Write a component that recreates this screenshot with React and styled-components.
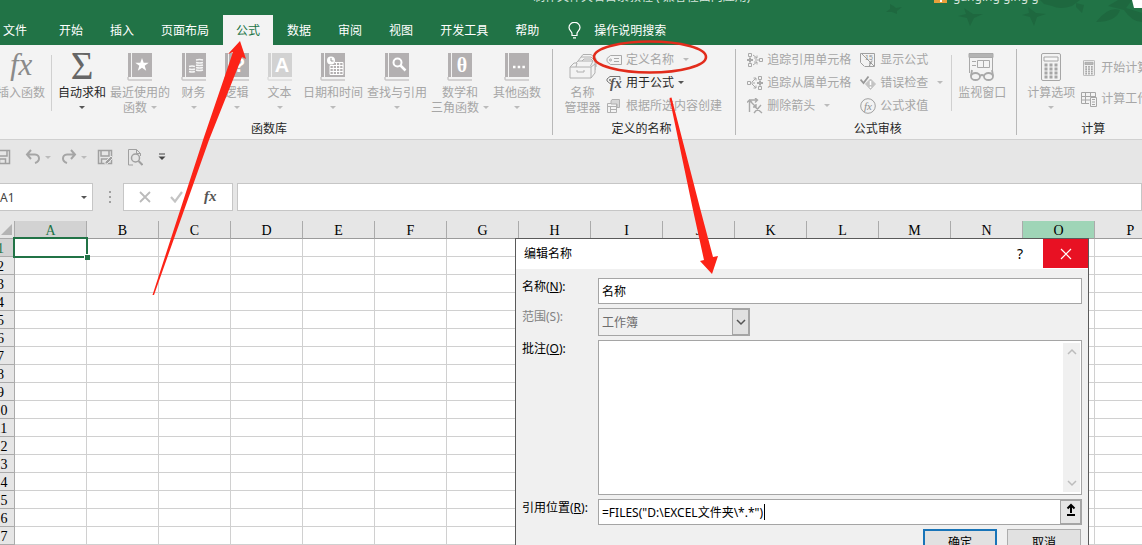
// App.jsx
import React, { useState } from 'react';
import styled, { createGlobalStyle } from 'styled-components';

const GlobalStyle = createGlobalStyle`
  * {
    box-sizing: border-box;
  }

  body {
    margin: 0;
    overflow: hidden;
    background: #e6e6e6;
    color: #262626;
    font: 12px/15px 'Noto Sans', 'Noto Sans CJK SC', sans-serif;
  }

  button, input, select, textarea {
    margin: 0;
    padding: 0;
    border: 0;
    border-radius: 0;
    background: none;
    color: inherit;
    font: inherit;
    outline: none;
  }

  svg {
    display: block;
    flex: none;
  }
`;

const Shell = styled.div`
  position: relative;
  display: flex;
  flex-direction: column;
  height: 100vh;
  margin-left: -13px;
  overflow: hidden;
`;

/* ---------- header ---------- */

const Header = styled.header`
  position: relative;
  background: #217346;
  color: #fff;
`;

const Leaves = styled.svg`
  position: absolute;
  top: 0;
  right: 0;
`;

const TitleBar = styled.div`
  display: flex;
  height: 15px;
  padding-left: 546px;
  overflow: hidden;
  line-height: 12px;
  white-space: nowrap;
  color: #d3e3da;
`;

const Title = styled.span`
  flex: 0 0 388px;
  margin-top: -9px;
`;

const Account = styled.span`
  position: relative;
  margin: -9px 0 0 32px;
`;

const Tabs = styled.nav`
  display: flex;
  gap: 1px;
  height: 30px;
`;

const Tab = styled.button`
  flex: none;
  padding: 0 13px;
  margin: 0 ${({ $file }) => ($file ? '5px 0 3px' : '0')};
  background: ${({ $active }) => ($active ? '#f3f3f3' : 'transparent')};
  color: ${({ $active }) => ($active ? '#217346' : '#fff')};
`;

const Tell = styled.button`
  display: flex;
  align-items: center;
  gap: 13px;
  margin-left: 15px;
`;

/* ---------- ribbon ---------- */

const Ribbon = styled.div`
  display: flex;
  flex: none;
  background: #f3f3f3;
  border-bottom: 1px solid #d0d0d0;
`;

const Group = styled.section`
  display: flex;
  flex: none;
  flex-direction: column;
  justify-content: space-between;
  position: relative;
  height: 94px;
  padding: 3px ${({ $right }) => $right || 4}px 3px ${({ $left }) => $left || 4}px;

  &::after {
    content: '';
    position: absolute;
    top: 4px;
    right: 0;
    bottom: 4px;
    border-right: 1px solid #b8b8b8;
  }
`;

const Tools = styled.div`
  display: flex;
  align-items: flex-start;
`;

const Caption = styled.div`
  text-align: center;
`;

const Big = styled.button`
  display: flex;
  flex: none;
  flex-direction: column;
  align-items: center;
  min-width: 43px;
  padding: 5px 2px 0;
  color: ${({ $on }) => ($on ? '#262626' : '#a6a6a6')};
  white-space: nowrap;
`;

const Label = styled.span`
  margin-top: 4px;
  text-align: center;
`;

const Line = styled.span`
  display: flex;
  align-items: center;
  justify-content: center;
  height: 15px;
  gap: 4px;
`;

const Rule = styled.div`
  height: 56px;
  margin: 7px 4px 0 ${({ $gap }) => $gap || 4}px;
  border-left: 1px solid #d0d0d0;
`;

const Stack = styled.div`
  display: flex;
  flex-direction: column;
  margin-left: ${({ $gap }) => $gap || 0}px;
  padding-top: ${({ $top }) => $top || 0}px;
`;

const Small = styled.button`
  display: flex;
  align-items: center;
  gap: 4px;
  height: ${({ $tall }) => ($tall ? '31px' : '23px')};
  color: ${({ $on }) => ($on ? '#262626' : '#a6a6a6')};
  white-space: nowrap;
`;

const Caret = styled.i`
  margin-left: ${({ $far }) => ($far ? '5px' : '0')};
  border: 3px solid transparent;
  border-top-color: ${({ $dark }) => ($dark ? '#555' : '#bbb')};
  border-bottom: 0;
`;

/* ---------- quick access and formula bar ---------- */

const QuickBar = styled.div`
  display: flex;
  align-items: center;
  height: 34px;
  padding: 0 8px;
  color: #a0a0a0;
`;

const QuickButton = styled.button`
  display: flex;
  align-items: center;
  gap: 4px;
  margin-right: ${({ $split }) => ($split ? '10px' : '14px')};
`;

const FormulaBar = styled.div`
  display: flex;
  height: 28px;
  margin: 9px 0 10px;
`;

const Box = styled.div`
  display: flex;
  align-items: center;
  justify-content: space-around;
  flex: ${({ $grow, $w }) => ($grow ? '1 1 0' : `0 0 ${$w}px`)};
  min-width: 0;
  margin-right: ${({ $grow }) => ($grow ? '0' : '4px')};
  padding: 0 5px;
  background: #fff;
  border: 1px solid #c6c6c6;
`;

const CellName = styled.input`
  flex: 1;
  min-width: 0;
  padding-left: 7px;
  color: #444;
`;

const Formula = styled.input`
  flex: 1;
  min-width: 0;
`;

const Dots = styled.div`
  display: flex;
  flex: 0 0 26px;
  flex-direction: column;
  align-items: center;
  justify-content: center;
  gap: 3px;

  i {
    width: 2px;
    height: 2px;
    background: #a0a0a0;
  }
`;

/* ---------- sheet ---------- */

const SheetArea = styled.main`
  position: relative;
  flex: 1;
  min-height: 0;
  overflow: hidden;
  background: #fff;
`;

const Sheet = styled.table`
  width: 1252px;
  table-layout: fixed;
  border-collapse: separate;
  border-spacing: 0;
  font-family: 'Liberation Serif', serif;
  font-size: 14px;
  color: #000;
`;

const Corner = styled.th`
  width: 28px;
  height: 18px;
  padding: 0 3px 0 14px;
  background: #e6e6e6;
  border-right: 1px solid #ababab;
  border-bottom: 1px solid #ababab;
`;

const ColHead = styled.th`
  height: 18px;
  padding: 2px 0 0;
  background: ${({ $tone }) => $tone || '#e6e6e6'};
  border-right: 1px solid #ababab;
  border-bottom: 1px solid ${({ $active }) => ($active ? '#217346' : '#9b9b9b')};
  color: ${({ $active }) => ($active ? '#217346' : '#000')};
  font-weight: normal;
  line-height: 15px;
`;

const RowHead = styled.th`
  height: 18px;
  padding: 2px 0 0;
  background: ${({ $active }) => ($active ? '#d2d2d2' : '#e6e6e6')};
  border-right: 1px solid #ababab;
  border-bottom: 1px solid #ababab;
  color: ${({ $active }) => ($active ? '#217346' : '#000')};
  font-weight: normal;
  line-height: 15px;
`;

const Cell = styled.td`
  position: relative;
  z-index: ${({ $active }) => ($active ? 1 : 0)};
  height: 18px;
  padding: 0;
  border-right: 1px solid #d0d0d0;
  border-bottom: 1px solid #d0d0d0;
`;

const Selection = styled.div`
  position: absolute;
  inset: -2px;
  border: 2px solid #217346;

  &::after {
    content: '';
    position: absolute;
    right: -4px;
    bottom: -4px;
    width: 5px;
    height: 5px;
    background: #217346;
    border: 1px solid #fff;
    border-right: 0;
    border-bottom: 0;
  }
`;

/* ---------- dialog ---------- */

const Dialog = styled.form`
  position: absolute;
  z-index: 2;
  top: 17px;
  right: 53px;
  width: 574px;
  background: #f0f0f0;
  border: 1px solid #5a5a5a;
  color: #000;
`;

const DialogBar = styled.div`
  display: flex;
  align-items: flex-start;
  height: 30px;
  padding-left: 8px;
  background: #fff;
  line-height: 30px;
`;

const DialogTitle = styled.span`
  flex: 1;
`;

const HelpButton = styled.button`
  width: 46px;
  font-size: 14px;
  line-height: 29px;
`;

const CloseButton = styled.button`
  display: flex;
  align-items: center;
  justify-content: center;
  width: 45px;
  height: 29px;
  background: #e81123;
`;

const Fields = styled.div`
  display: grid;
  grid-template-columns: 76px 1fr;
  row-gap: 4px;
  padding: 9px 6px 4px;
`;

const FieldLabel = styled.label`
  line-height: 18px;
  color: ${({ $off }) => ($off ? '#838383' : '#000')};
`;

const Field = styled.div`
  display: flex;
  align-items: center;
  height: ${({ $h }) => $h || 26}px;
  width: ${({ $w }) => ($w ? `${$w}px` : 'auto')};
  background: ${({ $off }) => ($off ? '#f0f0f0' : '#fff')};
  border: 1px solid #a5a5a5;
  color: ${({ $off }) => ($off ? '#6d6d6d' : '#000')};
`;

const TextInput = styled.input`
  flex: ${({ $fit }) => ($fit ? 'none' : '1')};
  min-width: 0;
  padding-left: 3px;
  field-sizing: ${({ $fit }) => ($fit ? 'content' : 'fixed')};
`;

const TextCursor = styled.i`
  width: 1px;
  height: 16px;
  margin: 0 auto 0 1px;
  background: #000;
`;

const Scope = styled.select`
  flex: 1;
  appearance: none;
  padding-left: 3px;
  opacity: 1;
`;

const DropArrow = styled.span`
  display: flex;
  align-items: center;
  justify-content: center;
  align-self: stretch;
  width: 17px;
  background: #e1e1e1;
  border: 1px solid #a5a5a5;
`;

const Comment = styled.textarea`
  flex: 1;
  align-self: stretch;
  padding: 3px;
  resize: none;
`;

const Scroller = styled.div`
  display: flex;
  flex-direction: column;
  justify-content: space-between;
  align-self: stretch;
  align-items: center;
  width: 17px;
  margin: 2px 1px;
  padding: 5px 0;
  background: #f0f0f0;
`;

const PickButton = styled.button`
  display: flex;
  align-items: flex-start;
  justify-content: center;
  align-self: stretch;
  width: 21px;
  padding-top: 2px;
  background: #e6e6e6;
  border: 1px solid #a5a5a5;
`;

const Actions = styled.div`
  display: flex;
  justify-content: flex-end;
  gap: 10px;
  padding: 0 7px 8px;
`;

const Action = styled.button`
  width: 74px;
  height: 26px;
  background: #e1e1e1;
  border: ${({ $primary }) => ($primary ? '2px solid #1874b8' : '1px solid #adadad')};
`;

const Marks = styled.svg`
  position: absolute;
  z-index: 3;
  top: 0;
  left: 13px;
  pointer-events: none;
`;

/* ---------- icons ---------- */

const serif = "'Liberation Serif', serif";

function Book({ light, children }) {
  const tone = light ? '#d2d2d2' : '#b3b0b1';
  return (
    <svg width="26" height="28" viewBox="0 0 26 28">
      <path d="M1 0h3v24H1z" fill={tone} />
      <path d="M5 0h20v24H5z" fill={tone} />
      <path d="M1 24v2.500q0 .5 .5 .5H25" fill="none" stroke={tone} />
      {children}
    </svg>
  );
}

const BookText = ({ char, size = 20, font = 'Liberation Sans' }) => (
  <text x="15" y="19" fontSize={size} fontWeight="bold" fontFamily={font} textAnchor="middle" fill="#fff">
    {char}
  </text>
);

const FxIcon = () => (
  <svg width="30" height="28" viewBox="0 0 30 28">
    <text x="4" y="22" fontSize="31" fontStyle="italic" fontFamily={serif} fill="#8a8a8a">fx</text>
  </svg>
);

const SumIcon = () => (
  <svg width="28" height="28" viewBox="0 0 28 28">
    <text x="14" y="26" fontSize="39" fontFamily={serif} textAnchor="middle" fill="#666">Σ</text>
  </svg>
);

const RecentIcon = () => (
  <Book>
    <path d="M15 5l1.700 4.800h5l-4 3 1.500 5-4.200-3-4.200 3 1.500-5-4-3h5z" fill="#fff" />
  </Book>
);

const MoneyIcon = () => (
  <Book>
    <g fill="none" stroke="#f5f5f5" strokeWidth="1.500">
      <path d="M15 7q3.500-1 7 0M15 9.500q3.500 1 7 0M15 12q3.500 1 7 0M15 14.500q3.500 1 7 0M15 17q3.500 1 7 0" />
      <path d="M8 13.500q3-1 6 0M8 16q3 1 6 0M8 18.500q3 1 6 0" />
    </g>
  </Book>
);

const DateIcon = () => (
  <Book>
    <circle cx="11" cy="7.500" r="4" fill="#fff" />
    <path d="M11 5v3h2.500" fill="none" stroke="#999" />
    <path d="M10 12.500h13v9H10zM10 15.500h13M10 18.500h13M13.300 12v9M16.500 10v11M19.700 10v11M15 9.500h8v4" fill="none" stroke="#fff" />
  </Book>
);

const LookupIcon = () => (
  <Book>
    <circle cx="13.500" cy="9.500" r="4" fill="none" stroke="#fff" strokeWidth="2" />
    <path d="M16.500 12.500l5 5" stroke="#fff" strokeWidth="2.500" />
  </Book>
);

const MoreIcon = () => (
  <Book>
    <path d="M9 14h2.500M13.700 14h2.500M18.400 14h2.500" stroke="#fff" strokeWidth="2.500" />
  </Book>
);

const ManagerIcon = () => (
  <svg width="28" height="28" viewBox="0 0 28 28" fill="none" stroke="#b0b0b0">
    <path d="M5 12l4-4h15l-2.500 5M9 8l3-4h10l4 4v9M12 4l2-2.500h8l5 4V14M13 8l2-2h7l2 2" fill="#f3f3f3" />
    <path d="M1 14h21v11H1zM1 14l4-4h3l-1 4M22 25l4-5v-9l-4 3" fill="#f3f3f3" />
    <path d="M8 17v2h7v-2" />
  </svg>
);

const TagIcon = () => (
  <svg width="16" height="16" viewBox="0 0 16 16" fill="none" stroke="#a9a9a9">
    <path d="M4.500 3.500h11v9h-11L1 9.500v-3z" />
    <circle cx="4.500" cy="8" r="1" />
    <path d="M8 6.500h5M8 9.500h5" />
  </svg>
);

const UseIcon = () => (
  <svg width="16" height="16" viewBox="0 0 16 16">
    <path d="M14 5V1.500H4L1 4v2l3 2.500h1" fill="none" stroke="#777" />
    <circle cx="4" cy="5" r="1" fill="#777" />
    <text x="4" y="13" fontSize="14" fontStyle="italic" fontWeight="bold" fontFamily={serif} fill="#555">fx</text>
  </svg>
);

const CreateIcon = () => (
  <svg width="16" height="16" viewBox="0 0 16 16" fill="none" stroke="#b0b0b0">
    <path d="M1.500 5.500h9v9h-9zM1.500 8.500h9M4.500 8v6M4.500 11.500h6" />
    <path d="M6 1.500h7.500v8H11V6H5V3z" fill="#d6d6d6" />
  </svg>
);

const PrecedentIcon = () => (
  <svg width="16" height="16" viewBox="0 0 16 16" fill="none" stroke="#a9a9a9">
    <path d="M1.500 1.500h3v3h-3zM1.500 11.500h3v3h-3zM12.500 6.500h3v3h-3z" />
    <path d="M0 8h6M3 5.500v5" strokeWidth="2" />
    <path d="M6 3l4 3M10 3.500V6H7M6 13l4-3M7 10h3v2.500M8 8h4" />
  </svg>
);

const DependentIcon = () => (
  <svg width="16" height="16" viewBox="0 0 16 16" fill="none" stroke="#a9a9a9">
    <path d="M11.500 1.500h3v3h-3zM11.500 11.500h3v3h-3zM.5 6.500h3v3h-3z" />
    <path d="M10 8h6M13 5.500v5" strokeWidth="2" />
    <path d="M5 7l4-4M6.500 3H9v2.500M5 9l4 4M6.500 13H9v-2.500M4 8h4" />
  </svg>
);

const RemoveIcon = () => (
  <svg width="16" height="16" viewBox="0 0 16 16" fill="none" stroke="#a9a9a9" strokeWidth="1.400">
    <path d="M2.500 14V2M0 4.500L2.500 2 5 4.500M2 2h8M8 0l2.500 2L8 4.500M3 3l6 6M9 6v3H6M7 8l8 7M14 7l-7 8" />
  </svg>
);

const ShowIcon = () => (
  <svg width="16" height="16" viewBox="0 0 16 16">
    <path d="M.5 1.500h14v13H5M.5 1.500v9l4 4M2 2l12 12" fill="none" stroke="#a0a0a0" />
    <text x="5" y="8" fontSize="7" fontFamily="Liberation Sans" fill="#8f8f8f">15</text>
    <path d="M12.500 9q-1.500-.5-2 1.500l-1 3.500M9 11h3" fill="none" stroke="#8f8f8f" />
  </svg>
);

const CheckIcon = () => (
  <svg width="16" height="16" viewBox="0 0 16 16" fill="none">
    <path d="M10.500 4l5 5-5 5.500-5-5.500z" fill="#c4c4c4" stroke="#c4c4c4" />
    <path d="M10.500 6v4M10.500 11.500v1.500" stroke="#fff" strokeWidth="1.500" />
    <path d="M.5 4.500L3.500 8l5-6.500" stroke="#999" strokeWidth="1.800" />
  </svg>
);

const EvalIcon = () => (
  <svg width="16" height="16" viewBox="0 0 16 16">
    <circle cx="8" cy="8" r="7.300" fill="none" stroke="#a0a0a0" />
    <text x="8" y="12" fontSize="11" fontStyle="italic" textAnchor="middle" fontFamily={serif} fill="#8f8f8f">fx</text>
  </svg>
);

const WatchIcon = () => (
  <svg width="30" height="28" viewBox="0 0 30 28" fill="none" stroke="#a9a9a9">
    <path d="M2 .5h24v4H2z" fill="#b3b3b3" />
    <path d="M2.500 4v16M25.500 4v13M5 8.500h4M5 12.500h4M10.500 7.500h6v7h-6zM16.500 7.500h6v7h-6z" />
    <path d="M5 17l-1 6M25 17l1 6M13 23q2-2 4 0" strokeWidth="1.800" />
    <ellipse cx="8.500" cy="23.500" rx="4.500" ry="3.500" strokeWidth="1.800" />
    <ellipse cx="21.500" cy="23.500" rx="4.500" ry="3.500" strokeWidth="1.800" />
  </svg>
);

function CalcIcon({ size = 28 }) {
  return (
    <svg width={size} height={size} viewBox="0 0 28 28" fill="none" stroke="#a6a6a6" strokeWidth={size > 20 ? 1 : 1.5}>
      <rect x="4.500" y=".5" width="19" height="27" rx="1.500" />
      <path d="M7 4h14v4H7z" fill={size > 20 ? '#f8f8f8' : '#b8b8b8'} />
      <path d="M7.500 12h13M7.500 16h13M7.500 20h13M7.500 24h13" strokeWidth="3" strokeDasharray="3 2" />
    </svg>
  );
}

const SheetCalcIcon = () => (
  <svg width="16" height="16" viewBox="0 0 16 16" fill="none" stroke="#a6a6a6">
    <path d="M8 12.500H.5v-11h14V6M.5 5.500h14M.5 9H9M4.500 1.500v11M9.500 1.500V6" />
    <path d="M9.500 6.500h6v9h-6zM11 8.500h3M11 11h3M11 13.500h3" />
  </svg>
);

const BulbIcon = () => (
  <svg width="13" height="17" viewBox="0 0 13 17" fill="none" stroke="#fff" strokeWidth="1.200">
    <path d="M4 11.500C4 9.500 1 8.500 1 5.500a5.300 5 0 0111 0c0 3-3 4-3 6v2H4zM4 13.500h5M5 15.800h3" />
  </svg>
);

const SaveIcon = ({ pen }) => (
  <svg width="16" height="16" viewBox="0 0 16 16" fill="none" stroke="#a0a0a0" strokeWidth="1.500">
    <path d="M1.500 1.500h13v13h-13zM4 2v5h8V2M4.500 14v-4h6v4" />
    {pen && <path d="M8 13l6-6 2 2-6 6H8z" fill="#a0a0a0" stroke="#e6e6e6" strokeWidth="1" />}
  </svg>
);

const UndoIcon = ({ flip }) => (
  <svg width="16" height="16" viewBox="0 0 16 16" fill="none" stroke="#a5a5a5" strokeWidth="2">
    <path
      d={flip ? 'M10 1l4 4.500L10 10M14 5.500H6C3 5.500 2 8 2 9.500S3 13 6 14' : 'M6 1L2 5.500 6 10M2 5.500h8c3 0 4 2.500 4 4S13 13 10 14'}
    />
  </svg>
);

const PreviewIcon = () => (
  <svg width="16" height="17" viewBox="0 0 16 17" fill="none" stroke="#a0a0a0">
    <path d="M6 16H1.500V.5h8l4 4V7M9.500 .5v4h4" />
    <circle cx="8.500" cy="9" r="4" strokeWidth="1.500" />
    <path d="M11.500 12l4 4" strokeWidth="2" />
  </svg>
);

const Chevron = ({ up, color = '#bcbcbc' }) => (
  <svg width="10" height="7" viewBox="0 0 10 7">
    <path d={up ? 'M1 6l4-4 4 4' : 'M1 1l4 4 4-4'} fill="none" stroke={color} strokeWidth="1.500" />
  </svg>
);

/* ---------- parts ---------- */

function BigButton({ icon, lines, on, caret }) {
  return (
    <Big type="button" $on={on}>
      {icon}
      <Label>
        {lines.map((text, i) => (
          <Line key={text}>
            {text}
            {caret && lines.length > 1 && i === lines.length - 1 && <Caret />}
          </Line>
        ))}
        {caret && lines.length === 1 && <Line><Caret $dark={on} /></Line>}
      </Label>
    </Big>
  );
}

function SmallButton({ icon, text, on, caret, far, tall }) {
  return (
    <Small type="button" $on={on} $tall={tall}>
      {icon}
      {text}
      {caret && <Caret $dark={on} $far={far} />}
    </Small>
  );
}

const tabs = ['文件', '开始', '插入', '页面布局', '公式', '数据', '审阅', '视图', '开发工具', '帮助'];
const columns = 'ABCDEFGHIJKLMNOPQ'.split('');
const rows = Array.from({ length: 18 }, (_, i) => i + 1);
const tones = { A: '#d2d2d2', O: '#9fd5b7' };

function NameDialog() {
  const [name, setName] = useState('名称');
  const [refersTo, setRefersTo] = useState('=FILES("D:\\EXCEL文件夹\\*.*")');

  return (
    <Dialog onSubmit={(e) => e.preventDefault()}>
      <DialogBar>
        <DialogTitle>编辑名称</DialogTitle>
        <HelpButton type="button">?</HelpButton>
        <CloseButton type="button" aria-label="关闭">
          <svg width="12" height="12" viewBox="0 0 12 12">
            <path d="M1 1l10 10M11 1L1 11" stroke="#fff" strokeWidth="1.200" />
          </svg>
        </CloseButton>
      </DialogBar>
      <Fields>
        <FieldLabel htmlFor="name">名称(<u>N</u>):</FieldLabel>
        <Field>
          <TextInput id="name" value={name} onChange={(e) => setName(e.target.value)} />
        </Field>
        <FieldLabel htmlFor="scope" $off>范围(S):</FieldLabel>
        <Field $off $h={28} $w={152}>
          <Scope id="scope" disabled>
            <option>工作簿</option>
          </Scope>
          <DropArrow><Chevron color="#555" /></DropArrow>
        </Field>
        <FieldLabel htmlFor="comment">批注(<u>O</u>):</FieldLabel>
        <Field $h={155}>
          <Comment id="comment" />
          <Scroller>
            <Chevron up />
            <Chevron />
          </Scroller>
        </Field>
        <FieldLabel htmlFor="refers">引用位置(<u>R</u>):</FieldLabel>
        <Field>
          <TextInput id="refers" $fit value={refersTo} onChange={(e) => setRefersTo(e.target.value)} />
          <TextCursor />
          <PickButton type="button" aria-label="折叠对话框">
            <svg width="12" height="14" viewBox="0 0 12 14">
              <path d="M6 2v8M2.500 5.500L6 2l3.500 3.500M2 12h8" fill="none" stroke="#000" strokeWidth="2" />
            </svg>
          </PickButton>
        </Field>
      </Fields>
      <Actions>
        <Action type="submit" $primary>确定</Action>
        <Action type="button">取消</Action>
      </Actions>
    </Dialog>
  );
}

function App() {
  return (
    <>
      <GlobalStyle />
      <Shell>
        <Header>
          <Leaves width="262" height="45" viewBox="0 0 262 45" fill="#1e683f">
            <path d="M10 4q4 2 6 4l6-1-5 4v3l-5-2-6 0 4-3zM84 8l9 6 10 0-9 4-4 8-3-8-9-2 8-2zM148 7l8 6 10 1-9 3-3 9-4-9-8-2 7-2z" />
            <path d="M160 0h40l-8 6q-12 4-20 0l-8-2zM196 3l8 2-2 8-6-6zM216 22q12-16 24-12-4 12-24 12zM228 6l10-6h14l-6 8 16 5v9q-10 0-18-12z" />
            <path d="M54 3V0h13v3z" fill="#e9a03b" />
            <path d="M60 0h2v2h-2z" fill="#fff" />
            <path d="M252 0h10v8h-8z" fill="#fff" />
          </Leaves>
          <TitleBar>
            <Title>制作文件夹名目录教程 ( 兼容性面向应用)</Title>
            <Account>ganging ging  g</Account>
          </TitleBar>
          <Tabs>
            {tabs.map((tab) => (
              <Tab key={tab} type="button" $active={tab === '公式'} $file={tab === '文件'}>
                {tab}
              </Tab>
            ))}
            <Tell type="button">
              <BulbIcon />
              操作说明搜索
            </Tell>
          </Tabs>
        </Header>

        <Ribbon>
          <Group $left={8} $right={10}>
            <Tools>
              <BigButton icon={<FxIcon />} lines={['插入函数']} />
              <Rule />
              <BigButton icon={<SumIcon />} lines={['自动求和']} on caret />
              <BigButton icon={<RecentIcon />} lines={['最近使用的', '函数']} caret />
              <BigButton icon={<MoneyIcon />} lines={['财务']} caret />
              <BigButton icon={<Book><BookText char="?" /></Book>} lines={['逻辑']} caret />
              <BigButton icon={<Book light><BookText char="A" /></Book>} lines={['文本']} caret />
              <BigButton icon={<DateIcon />} lines={['日期和时间']} caret />
              <BigButton icon={<LookupIcon />} lines={['查找与引用']} caret />
              <BigButton icon={<Book><BookText char="θ" font="Liberation Serif" /></Book>} lines={['数学和', '三角函数']} caret />
              <BigButton icon={<MoreIcon />} lines={['其他函数']} caret />
            </Tools>
            <Caption>函数库</Caption>
          </Group>
          <Group $left={8} $right={14}>
            <Tools>
              <BigButton icon={<ManagerIcon />} lines={['名称', '管理器']} />
              <Stack $gap={2}>
                <SmallButton icon={<TagIcon />} text="定义名称" caret far />
                <SmallButton icon={<UseIcon />} text="用于公式" on caret />
                <SmallButton icon={<CreateIcon />} text="根据所选内容创建" />
              </Stack>
            </Tools>
            <Caption>定义的名称</Caption>
          </Group>
          <Group $left={11} $right={9}>
            <Tools>
              <Stack>
                <SmallButton icon={<PrecedentIcon />} text="追踪引用单元格" />
                <SmallButton icon={<DependentIcon />} text="追踪从属单元格" />
                <SmallButton icon={<RemoveIcon />} text="删除箭头" caret far />
              </Stack>
              <Stack $gap={9}>
                <SmallButton icon={<ShowIcon />} text="显示公式" />
                <SmallButton icon={<CheckIcon />} text="错误检查" caret far />
                <SmallButton icon={<EvalIcon />} text="公式求值" />
              </Stack>
              <Rule $gap={8} />
              <BigButton icon={<WatchIcon />} lines={['监视窗口']} />
            </Tools>
            <Caption>公式审核</Caption>
          </Group>
          <Group $left={8} $right={8}>
            <Tools>
              <BigButton icon={<CalcIcon />} lines={['计算选项']} caret />
              <Stack $gap={4} $top={4}>
                <SmallButton icon={<CalcIcon size={16} />} text="开始计算" tall />
                <SmallButton icon={<SheetCalcIcon />} text="计算工作表" tall />
              </Stack>
            </Tools>
            <Caption>计算</Caption>
          </Group>
        </Ribbon>

        <QuickBar>
          <QuickButton type="button" aria-label="保存"><SaveIcon /></QuickButton>
          <QuickButton type="button" aria-label="撤消" $split><UndoIcon /><Caret /></QuickButton>
          <QuickButton type="button" aria-label="恢复" $split><UndoIcon flip /><Caret /></QuickButton>
          <QuickButton type="button" aria-label="另存为"><SaveIcon pen /></QuickButton>
          <QuickButton type="button" aria-label="打印预览"><PreviewIcon /></QuickButton>
          <QuickButton type="button" aria-label="自定义">
            <svg width="9" height="8" viewBox="0 0 9 8">
              <path d="M2 1h6" stroke="#444" />
              <path d="M1.500 3.500h7L5 7z" fill="#444" />
            </svg>
          </QuickButton>
        </QuickBar>

        <FormulaBar>
          <Box $w={106}>
            <CellName aria-label="名称框" defaultValue="A1" />
            <Caret $dark />
          </Box>
          <Dots><i /><i /><i /></Dots>
          <Box $w={110}>
            <svg width="12" height="12" viewBox="0 0 12 12">
              <path d="M1 1l10 10M11 1L1 11" stroke="#bbb" strokeWidth="1.800" />
            </svg>
            <svg width="13" height="12" viewBox="0 0 13 12">
              <path d="M1 6l4 4.500L12 1" fill="none" stroke="#c4c4c4" strokeWidth="2.200" />
            </svg>
            <svg width="14" height="16" viewBox="0 0 14 16">
              <text x="1" y="12" fontSize="15" fontStyle="italic" fontWeight="bold" fontFamily={serif} fill="#555">fx</text>
            </svg>
          </Box>
          <Box $grow>
            <Formula aria-label="编辑栏" />
          </Box>
        </FormulaBar>

        <SheetArea>
          <Sheet>
            <thead>
              <tr>
                <Corner>
                  <svg width="11" height="11" viewBox="0 0 11 11">
                    <path d="M11 0v11H0z" fill="#b4b4b4" />
                  </svg>
                </Corner>
                {columns.map((col) => (
                  <ColHead key={col} $tone={tones[col]} $active={col === 'A'}>{col}</ColHead>
                ))}
              </tr>
            </thead>
            <tbody>
              {rows.map((row) => (
                <tr key={row}>
                  <RowHead $active={row === 1}>{row}</RowHead>
                  {columns.map((col) => {
                    const active = row === 1 && col === 'A';
                    return <Cell key={col} $active={active}>{active && <Selection />}</Cell>;
                  })}
                </tr>
              ))}
            </tbody>
          </Sheet>
          <NameDialog />
        </SheetArea>

        <Marks width="760" height="310" viewBox="0 0 760 310" fill="#fc2317">
          <path d="M152.500 295L203 140l30-88-5 2 12-13 6 18-4-2-33 83-55 155z" />
          <path d="M669.500 98l2-.5L700 208l13 49 5-1-6 18-12-13 4-1-11-50z" />
          <ellipse cx="650" cy="57" rx="56" ry="15.500" fill="none" stroke="#e22c1c" strokeWidth="2.600" />
        </Marks>
      </Shell>
    </>
  );
}

export default App;
